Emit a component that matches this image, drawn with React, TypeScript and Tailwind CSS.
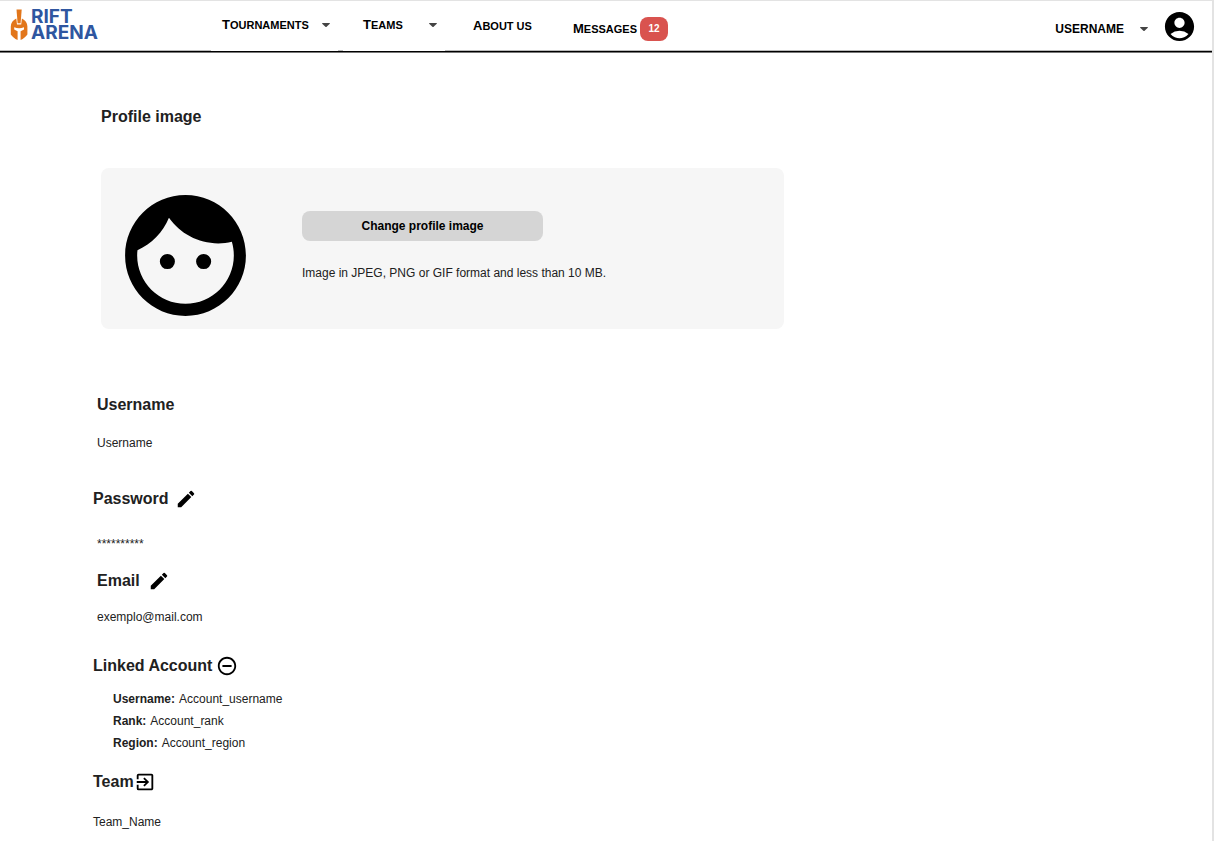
import React from "react";
import {
  MdAccountCircle,
  MdEdit,
  MdExitToApp,
  MdRemoveCircleOutline,
} from "react-icons/md";

function Caret() {
  return (
    <svg className="h-1 w-2 shrink-0" viewBox="0 0 8 4" aria-hidden="true">
      <path d="M.6 0h6.8c.5 0 .7.5.4.8L4.600 3.700a.9.9 0 0 1-1.200 0L.2.800C-.1.500.1 0 .6 0z" fill="#444" />
    </svg>
  );
}

function Logo() {
  return (
    <a href="#" className="flex items-center pb-[2px] pl-[10px]">
      <svg className="h-8 w-[18px]" viewBox="0 0 18 32" fill="#e2761b" aria-hidden="true">
        <path d="M6.500.5h5.200L10.600 14.200H7.600z" />
        <path d="M6.300 9.500L7 15.600H11.200L11.900 9.500C15.300 11 17.400 14 17.400 17.600V25.400C16 27.500 13.500 29.600 10.600 31V22.300L14 20.500V18.200Q11.500 19.200 9.100 19.200Q6.700 19.200 4.200 18.200V20.500L7.600 22.300V31C4.700 29.600 2.200 27.500 .8 25.400V17.600C.8 14 2.900 11 6.300 9.500z" />
      </svg>
      <span className="pl-[3px] font-[Inter,sans-serif] text-[19px] leading-4 font-bold text-[#2f56a0]">
        RIFT
        <br />
        ARENA
      </span>
    </a>
  );
}

function Face() {
  return (
    <svg className="size-[145px] shrink-0" viewBox="0 0 24 24" role="img" aria-label="Profile">
      <path d="M9 11.750A1.250 1.250 0 1 0 9 14.250 1.250 1.250 0 1 0 9 11.750zM15 11.750A1.250 1.250 0 1 0 15 14.250 1.250 1.250 0 1 0 15 11.750zM12 2C6.480 2 2 6.480 2 12s4.480 10 10 10 10-4.480 10-10S17.520 2 12 2zm0 18c-4.410 0-8-3.590-8-8 0-.29.02-.58.05-.86 2.360-1.050 4.230-2.980 5.210-5.370C11.070 8.330 14.050 10 17.420 10c.78 0 1.530-.09 2.250-.26.21.71.33 1.470.33 2.260 0 4.410-3.590 8-8 8z" />
    </svg>
  );
}

function NavLabel({ children }: { children: React.ReactNode }) {
  return (
    <span className="block text-[11px] whitespace-nowrap uppercase first-letter:text-[13px]">
      {children}
    </span>
  );
}

function Heading({ children }: { children: React.ReactNode }) {
  return <h2 className="text-base leading-6 font-bold">{children}</h2>;
}

function IconButton({ label, children }: { label: string; children: React.ReactNode }) {
  return (
    <button type="button" aria-label={label} className="text-[22px] text-black">
      {children}
    </button>
  );
}

const account = [
  ["Username:", "Account_username"],
  ["Rank:", "Account_rank"],
  ["Region:", "Account_region"],
];

export default function App() {
  return (
    <div className="min-h-screen border-t border-r-2 border-[#e3e3e3] bg-white font-['Liberation_Sans',Arial,sans-serif] text-xs leading-5 text-[#212121]">
      <header className="flex h-[51px] border-b border-black text-black shadow-[0_1px_0_#777,inset_0_-1px_0_#bbb]">
        <div className="flex w-[211px] items-center">
          <Logo />
        </div>
        <nav className="flex font-bold">
          <button type="button" className="flex w-[127px] items-center justify-between bg-white pr-2 pb-[2px] pl-[11px]">
            <NavLabel>Tournaments</NavLabel>
            <Caret />
          </button>
          <button type="button" className="ml-[5px] flex w-[102px] items-center justify-between bg-white pr-2 pb-[2px] pl-5">
            <NavLabel>Teams</NavLabel>
            <Caret />
          </button>
          <a href="#" className="flex w-[100px] items-center pl-7">
            <NavLabel>About us</NavLabel>
          </a>
          <a href="#" className="ml-7 flex items-center gap-[3px] pt-[6px]">
            <NavLabel>Messages</NavLabel>
            <span className="flex h-6 w-7 items-center justify-center rounded-lg bg-[#d9534f] text-[10px] text-white">
              12
            </span>
          </a>
        </nav>
        <div className="ml-auto flex items-center gap-[14px] pr-[15px]">
          <button type="button" className="flex items-center gap-4 pt-[5px] font-bold">
            USERNAME
            <Caret />
          </button>
          <MdAccountCircle className="size-[35px]" />
        </div>
      </header>

      <main className="pt-[53px] pr-6 pb-2 pl-[93px]">
        <section className="pl-2">
          <Heading>Profile image</Heading>
          <div className="mt-[39px] flex w-full max-w-[683px] items-start rounded-lg bg-[#f6f6f6] pt-[15px] pb-px pl-3">
            <Face />
            <div className="ml-[44px] pt-7">
              <button type="button" className="h-[30px] w-[241px] rounded-lg bg-[#d5d5d5] font-bold text-black">
                Change profile image
              </button>
              <p className="mt-[22px]">Image in JPEG, PNG or GIF format and less than 10 MB.</p>
            </div>
          </div>
        </section>

        <section className="mt-16 pl-1">
          <Heading>Username</Heading>
          <p className="mt-4">Username</p>
        </section>

        <section className="mt-[34px]">
          <div className="flex items-center gap-[6px]">
            <Heading>Password</Heading>
            <IconButton label="Edit password">
              <MdEdit />
            </IconButton>
          </div>
          <p className="mt-[23px] pl-1">**********</p>
        </section>

        <section className="mt-[15px] pl-1">
          <div className="flex items-center gap-2">
            <Heading>Email</Heading>
            <IconButton label="Edit email">
              <MdEdit />
            </IconButton>
          </div>
          <p className="mt-[14px]">exemplo@mail.com</p>
        </section>

        <section className="mt-[27px]">
          <div className="flex items-center gap-1">
            <Heading>Linked Account</Heading>
            <IconButton label="Unlink account">
              <MdRemoveCircleOutline />
            </IconButton>
          </div>
          <dl className="mt-[10px] pl-5 leading-[22px]">
            {account.map(([name, value]) => (
              <div key={name} className="flex gap-1">
                <dt className="font-bold">{name}</dt>
                <dd>{value}</dd>
              </div>
            ))}
          </dl>
        </section>

        <section className="mt-4">
          <div className="flex items-center">
            <Heading>Team</Heading>
            <IconButton label="Leave team">
              <MdExitToApp />
            </IconButton>
          </div>
          <p className="mt-[18px]">Team_Name</p>
        </section>
      </main>
    </div>
  );
}
